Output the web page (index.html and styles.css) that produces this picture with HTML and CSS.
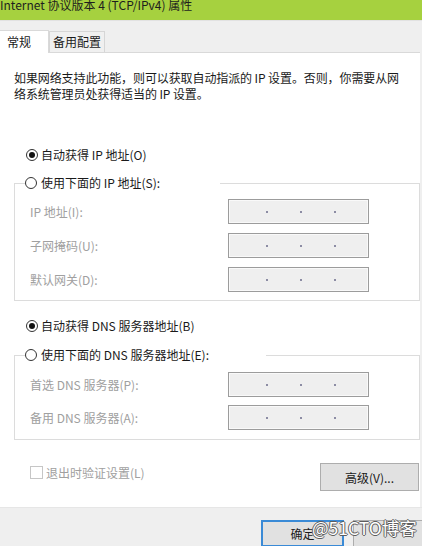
FILE: index.html
```html
<!DOCTYPE html>
<html lang="zh-CN">
<head>
<meta charset="utf-8">
<title>Internet 协议版本 4 (TCP/IPv4) 属性</title>
<link rel="stylesheet" href="styles.css">
</head>
<body>
<div class="titlebar"><span class="title">Internet 协议版本 4 (TCP/IPv4) 属性</span></div>
<div class="tabs">
  <div class="tab active">常规</div>
  <div class="tab">备用配置</div>
</div>
<div class="panel">
  <p class="desc">如果网络支持此功能，则可以获取自动指派的 IP 设置。否则，你需要从网<br>络系统管理员处获得适当的 IP 设置。</p>

  <div class="radio-row first"><span class="radio checked"></span><span>自动获得 IP 地址(O)</span></div>
  <fieldset class="group g1">
    <legend class="legend l1"><span class="radio"></span><span>使用下面的 IP 地址(S):</span></legend>
    <div class="grid g1grid">
      <span class="lbl">IP 地址(I):</span>
      <div class="ip"><i></i><i></i><i></i></div>
      <span class="lbl">子网掩码(U):</span>
      <div class="ip"><i></i><i></i><i></i></div>
      <span class="lbl">默认网关(D):</span>
      <div class="ip"><i></i><i></i><i></i></div>
    </div>
  </fieldset>

  <div class="radio-row second"><span class="radio checked"></span><span>自动获得 DNS 服务器地址(B)</span></div>
  <fieldset class="group g2">
    <legend class="legend l2"><span class="radio"></span><span>使用下面的 DNS 服务器地址(E):</span></legend>
    <div class="grid g2grid">
      <span class="lbl">首选 DNS 服务器(P):</span>
      <div class="ip"><i></i><i></i><i></i></div>
      <span class="lbl">备用 DNS 服务器(A):</span>
      <div class="ip"><i></i><i></i><i></i></div>
    </div>
  </fieldset>

  <div class="bottom-row">
    <div class="check-row"><span class="checkbox"></span><span>退出时验证设置(L)</span></div>
    <button class="btn adv">高级(V)...</button>
  </div>
</div>
<div class="footer">
  <button class="btn default">确定</button>
  <button class="btn cancel">取消</button>
  <span class="watermark">@51CTO博客</span>
</div>
</body>
</html>
```
FILE: styles.css
```css
* { box-sizing: border-box; }
html, body { margin: 0; padding: 0; }
body {
  width: 422px;
  height: 546px;
  overflow: hidden;
  background: #efefef;
  font-family: "Noto Sans CJK SC", "Noto Sans", sans-serif;
  font-size: 12px;
  color: #1a1a1a;
  position: relative;
}

.titlebar {
  height: 20px;
  background: #a6d13f;
  overflow: hidden;
}
.title {
  display: block;
  line-height: 14px;
  margin-top: -2px;
  color: #1e1e1e;
  font-size: 12px;
  white-space: nowrap;
}

.tabs {
  height: 32px;
  border-top: 1px solid #e2e2e2;
  display: flex;
  align-items: flex-end;
}
.tab {
  height: 21px;
  line-height: 20px;
  padding: 0 0 0 3px;
  width: 56px;
  white-space: nowrap;
  background: #f0f0f0;
  border: 1px solid #d6d6d6;
  border-bottom: none;
  color: #1a1a1a;
}
.tab.active {
  width: 49px;
  height: 23px;
  line-height: 22px;
  padding-left: 7px;
  background: #fff;
  border: 1px solid #d9d9d9;
  border-left: none;
  border-bottom: none;
  margin-bottom: -1px;
  position: relative;
  z-index: 1;
}

.panel {
  width: 420px;
  height: 455px;
  background: #fff;
  border-top: 1px solid #d9d9d9;
  padding-top: 17px;
}

.desc {
  margin: 0;
  padding-left: 14px;
  line-height: 16px;
  white-space: nowrap;
  letter-spacing: -0.1px;
}

.radio-row {
  display: flex;
  align-items: center;
  gap: 3px;
  height: 16px;
  line-height: 16px;
  padding-left: 26px;
}
.radio-row.first { margin-top: 45px; }
.radio-row.second { margin-top: 17px; }

.radio {
  width: 12px;
  height: 12px;
  border: 1px solid #333;
  border-radius: 50%;
  background: #fff;
  display: inline-flex;
  align-items: center;
  justify-content: center;
  flex: none;
}
.radio.checked::after {
  content: "";
  width: 6px;
  height: 6px;
  border-radius: 50%;
  background: #111;
}

.group {
  margin: 0 0 0 14px;
  width: 406px;
  border: 1px solid #dcdcdc;
  padding: 0 0 8px 0;
  min-width: 0;
}
.g1 { margin-top: 12px; }
.g2 { margin-top: 13px; padding-bottom: 9px; }

.legend {
  padding: 0;
  margin-left: 10px;
  height: 16px;
  line-height: 16px;
  display: flex;
  align-items: center;
  gap: 4px;
  background: #fff;
}
.l1 { width: 195px; }
.l2 { width: 241px; }

.grid {
  display: grid;
  grid-template-columns: 198px 141px;
  grid-auto-rows: 25px;
  align-items: center;
  padding-left: 15px;
}
.g1grid { margin-top: 8px; row-gap: 9px; }
.g2grid { margin-top: 9px; row-gap: 8px; }

.lbl { color: #a0a0a0; }

.ip {
  height: 25px;
  border: 1px solid #9c9c9c;
  box-shadow: inset 0 0 0 1px #f9f9f9;
  background: #efefef;
  display: flex;
  justify-content: center;
  align-items: center;
  gap: 32px;
  padding-left: 4px;
}
.ip i {
  display: block;
  width: 2px;
  height: 2px;
  background: #8c8ca4;
}

.bottom-row {
  display: flex;
  justify-content: space-between;
  align-items: flex-start;
  margin-top: 23px;
  padding-left: 30px;
  width: 419px;
}
.check-row {
  display: flex;
  align-items: center;
  gap: 3px;
  height: 16px;
  margin-top: 1px;
  color: #a0a0a0;
}
.checkbox {
  width: 13px;
  height: 13px;
  border: 1px solid #c6c6c6;
  background: #fff;
  flex: none;
}

.btn {
  font-family: inherit;
  font-size: 12px;
  color: #1a1a1a;
  background: #e1e1e1;
  border: 1px solid #adadad;
  padding: 0;
  margin: 0;
}
.adv {
  width: 99px;
  height: 28px;
}

.footer {
  height: 39px;
  padding: 12px 0 0 261px;
  display: flex;
  gap: 9px;
  position: relative;
  border-top: 1px solid #e6e6e6;
}
.footer .btn {
  width: 83px;
  height: 27px;
  flex: none;
}
.footer .btn.default {
  border: 2px solid #3a8ad6;
}
.footer .btn.cancel {
  width: 180px;
}

.watermark {
  position: absolute;
  left: 312px;
  top: 9px;
  font-size: 17.5px;
  line-height: 22px;
  color: #ffffff;
  text-shadow: -1px 0 #5e5e5e, 1px 0 #5e5e5e, 0 -1px #5e5e5e, 0 1px #5e5e5e;
  white-space: nowrap;
}
```
